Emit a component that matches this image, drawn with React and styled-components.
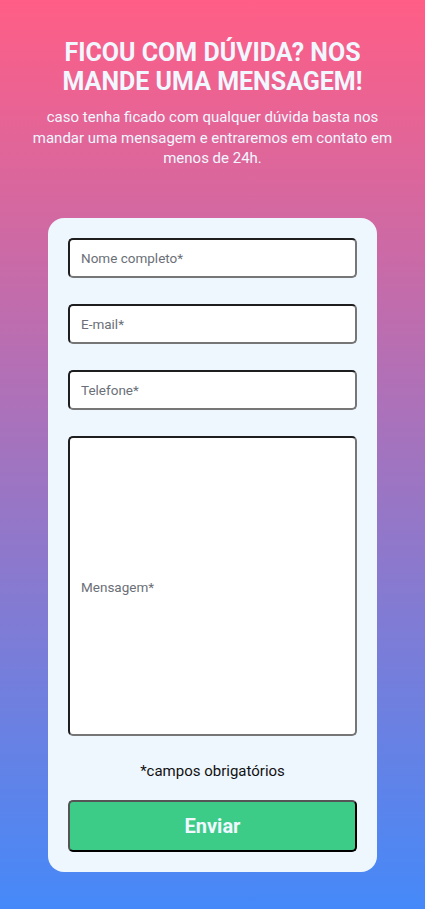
import React from "react";
import styled, { createGlobalStyle } from "styled-components";

const Global = createGlobalStyle`
  html, body { margin: 0; padding: 0; }
  body { font-family: Roboto, "Liberation Sans", sans-serif; }
  * { box-sizing: border-box; }
`;

const Page = styled.main`
  min-height: 909px;
  background: linear-gradient(180deg, #ff5e86 0%, #4589f9 100%);
  display: flex;
  flex-direction: column;
  align-items: center;
  padding: 38px 20px 37px;
`;

const Title = styled.h1`
  margin: 0;
  color: #f0f7ff;
  font-family: Roboto, "Liberation Sans", sans-serif;
  font-weight: 700;
  font-size: 25px;
  line-height: 29px;
  text-align: center;
  text-transform: uppercase;
  max-width: 320px;
`;

const Subtitle = styled.p`
  margin: 11px 0 0;
  color: #f0f7ff;
  font-size: 15px;
  line-height: 20.5px;
  text-align: center;
  max-width: 385px;
`;

const Card = styled.form`
  margin-top: 49px;
  width: 329px;
  background: #eef6fe;
  border-radius: 16px;
  padding: 20px 20px 20px;
  display: flex;
  flex-direction: column;
`;

const Field = styled.input`
  width: 289px;
  height: 40px;
  margin-bottom: 26px;
  border: 2px solid;
  border-color: #1e1e1e #767676 #767676 #1e1e1e;
  border-radius: 5px;
  background: #fff;
  padding: 0 11px;
  font-family: Roboto, "Liberation Sans", sans-serif;
  font-size: 13.5px;
  color: #222;
  outline: none;
  &::placeholder { color: #6b6f78; }
`;

const Area = styled.textarea`
  width: 289px;
  height: 300px;
  border: 2px solid;
  border-color: #1e1e1e #767676 #767676 #1e1e1e;
  border-radius: 5px;
  background: #fff;
  padding: 141px 11px 0;
  font-family: Roboto, "Liberation Sans", sans-serif;
  font-size: 13.5px;
  resize: none;
  outline: none;
  &::placeholder { color: #6b6f78; }
`;

const Note = styled.p`
  margin: 26px 0 0;
  text-align: center;
  font-size: 15px;
  line-height: 18px;
  color: #111;
`;

const Button = styled.button`
  margin-top: 20px;
  height: 52px;
  width: 289px;
  background: #3ccc88;
  border: 2px solid;
  border-color: #555 #000 #000 #555;
  border-radius: 5px;
  color: #f0f7ff;
  font-family: Roboto, "Liberation Sans", sans-serif;
  font-weight: 700;
  font-size: 20px;
  cursor: pointer;
`;

export default function App() {
  return (
    <>
      <Global />
      <Page>
        <Title>Ficou com dúvida? Nos mande uma mensagem!</Title>
        <Subtitle>
          caso tenha ficado com qualquer dúvida basta nos mandar uma mensagem e entraremos em contato em menos de 24h.
        </Subtitle>
        <Card onSubmit={(e) => e.preventDefault()}>
          <Field placeholder="Nome completo*" />
          <Field placeholder="E-mail*" />
          <Field placeholder="Telefone*" />
          <Area placeholder="Mensagem*" />
          <Note>*campos obrigatórios</Note>
          <Button type="submit">Enviar</Button>
        </Card>
      </Page>
    </>
  );
}
